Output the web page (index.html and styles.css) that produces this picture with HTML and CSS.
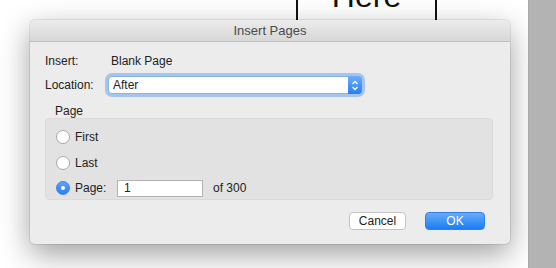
FILE: index.html
```html
<!DOCTYPE html>
<html>
<head>
    <meta charset="UTF-8">
    <title>Insert Pages</title>
    <link rel="stylesheet" href="styles.css">
</head>
<body>
    <div class="desk">
        <div class="canvas">
            <div class="here-box">
                <div class="here-text">Here</div>
            </div>

            <div class="dialog">
                <div class="titlebar">Insert Pages</div>

                <div class="content">
                    <div class="row row-insert">
                        <span class="label">Insert:</span>
                        <span class="value">Blank Page</span>
                    </div>

                    <div class="row row-location">
                        <span class="label">Location:</span>
                        <div class="select">
                            <span class="select-text">After</span>
                            <span class="stepper">
                                <svg width="8" height="11" viewBox="0 0 8 11">
                                    <path d="M1.5 4 L4 1.5 L6.5 4" fill="none" stroke="#fff" stroke-width="1.3"/>
                                    <path d="M1.5 7 L4 9.5 L6.5 7" fill="none" stroke="#fff" stroke-width="1.3"/>
                                </svg>
                            </span>
                        </div>
                    </div>

                    <div class="group-title">Page</div>
                    <div class="group">
                        <div class="radio-row">
                            <span class="radio"></span>
                            <span>First</span>
                        </div>
                        <div class="radio-row second">
                            <span class="radio"></span>
                            <span>Last</span>
                        </div>
                        <div class="radio-row third">
                            <span class="radio checked"></span>
                            <span class="page-label">Page:</span>
                            <span class="page-input">1</span>
                            <span class="of">of 300</span>
                        </div>
                    </div>

                    <div class="buttons">
                        <span class="btn">Cancel</span>
                        <span class="btn btn-ok">OK</span>
                    </div>
                </div>
            </div>
        </div>
        <div class="sidebar"></div>
    </div>
</body>
</html>
```

FILE: styles.css
```css
body {
    margin: 0;
    padding: 0;
    background-color: #fff;
    font-family: "Liberation Sans", Arial, sans-serif;
    font-size: 12px;
    color: #222;
    overflow: hidden;
}

.desk {
    display: flex;
    width: 556px;
    height: 268px;
}

.canvas {
    position: relative;
    flex: 1;
    overflow: hidden;
}

.sidebar {
    width: 27px;
    background-color: #b3b3b3;
    border-left: 1px solid #a9a9a9;
}

.here-box {
    display: flow-root;
    margin-left: 296px;
    width: 137px;
    height: 20px;
    border-left: 2px solid #111;
    border-right: 2px solid #111;
}

.here-text {
    margin-top: -20px;
    font-size: 32px;
    line-height: 32px;
    text-align: center;
    color: #111;
}

.dialog {
    position: absolute;
    left: 30px;
    top: 20px;
    width: 480px;
    height: 224px;
    background-color: #ececec;
    border-radius: 5px;
    box-shadow: 0 0 0 1px rgba(0, 0, 0, 0.08), 0 10px 30px rgba(0, 0, 0, 0.38);
    overflow: hidden;
}

.titlebar {
    height: 21px;
    line-height: 22px;
    text-align: center;
    font-size: 13px;
    color: #4b4b4b;
    background: linear-gradient(#ececec, #d7d7d7);
    border-bottom: 1px solid #c1c1c1;
}

.content {
    padding: 11px 17px 0 15px;
}

.row {
    display: flex;
    align-items: center;
}

.label {
    width: 63px;
}

.row-insert {
    height: 16px;
}

.row-insert .value {
    padding-left: 3px;
}

.row-location {
    margin-top: 7px;
    height: 18px;
}

.select {
    display: flex;
    width: 252px;
    height: 16px;
    background-color: #fff;
    border: 1px solid #86b2ee;
    border-radius: 4px;
    box-shadow: 0 0 0 3px rgba(110, 165, 240, 0.55);
}

.select-text {
    flex: 1;
    padding-left: 4px;
    line-height: 16px;
}

.stepper {
    display: flex;
    align-items: center;
    justify-content: center;
    width: 14px;
    margin: -1px -1px -1px 0;
    background: linear-gradient(#6badfa, #2a7ef2);
    border-radius: 0 4px 4px 0;
}

.group-title {
    margin: 10px 0 0 10px;
    height: 14px;
    line-height: 14px;
}

.group {
    padding: 10px 10px 0 10px;
    box-sizing: border-box;
    height: 82px;
    background-color: #e2e2e2;
    border: 1px solid #dadada;
    border-radius: 4px;
}

.radio-row {
    display: flex;
    align-items: center;
    height: 16px;
}

.radio-row.second {
    margin-top: 10px;
}

.radio-row.third {
    margin-top: 8px;
    height: 18px;
}

.radio {
    width: 12px;
    height: 12px;
    margin-right: 5px;
    border: 1px solid #a8a8a8;
    border-radius: 50%;
    background-color: #fff;
}

.radio.checked {
    position: relative;
    border-color: #3a87f0;
    background: linear-gradient(#5aa2fa, #2c7ef2);
}

.radio.checked::after {
    content: "";
    position: absolute;
    left: 4px;
    top: 4px;
    width: 4px;
    height: 4px;
    border-radius: 50%;
    background-color: #fff;
}

.page-label {
    width: 42px;
}

.page-input {
    width: 78px;
    height: 15px;
    padding-left: 6px;
    line-height: 15px;
    background-color: #fff;
    border: 1px solid #b3b3b3;
}

.of {
    margin-left: 10px;
}

.buttons {
    display: flex;
    justify-content: flex-end;
    gap: 19px;
    margin: 12px 8px 0 0;
}

.btn {
    width: 55px;
    height: 16px;
    line-height: 16px;
    text-align: center;
    background-color: #fff;
    border: 1px solid #c3c3c3;
    border-radius: 4px;
}

.btn-ok {
    width: 58px;
    color: #fff;
    border-color: #2f80ef;
    background: linear-gradient(#69abfa, #1b7cf3);
}
```
